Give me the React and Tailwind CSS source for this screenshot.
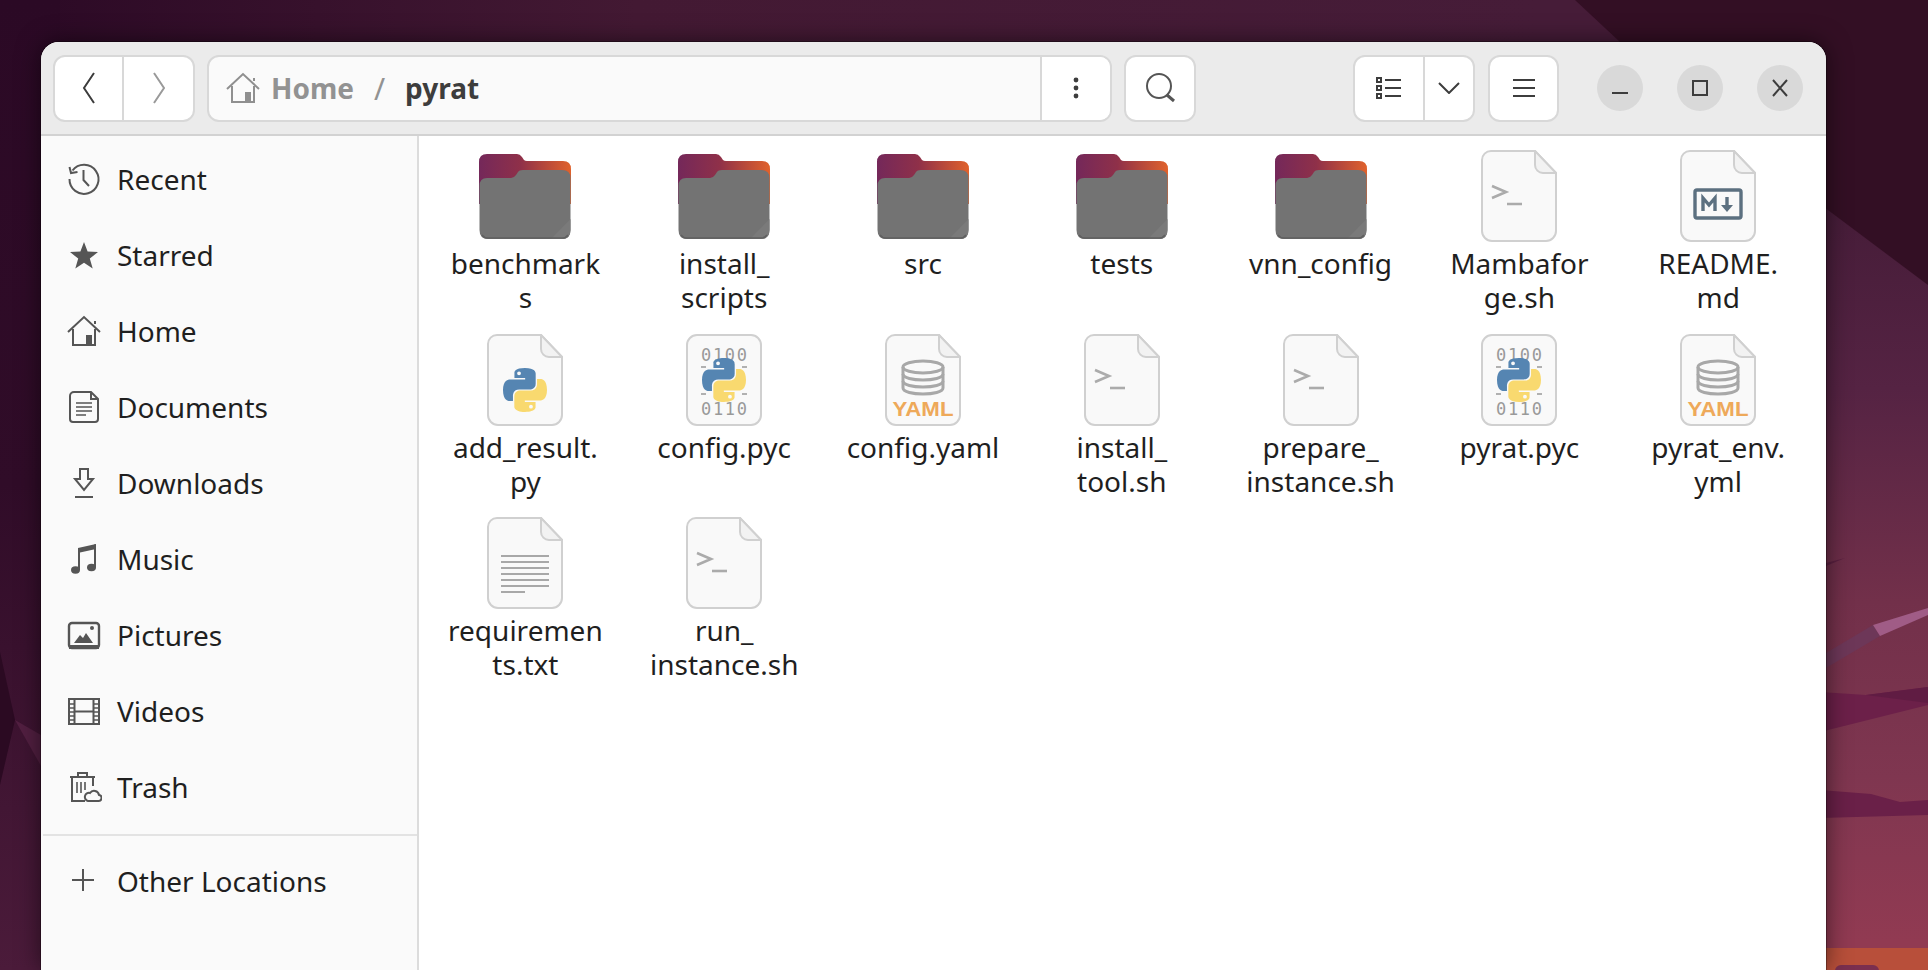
import React from "react";

const Wallpaper = () => (
  <svg className="absolute inset-0" width="1928" height="970" viewBox="0 0 1928 970">
    <defs>
      <linearGradient id="wtop" x1="0" y1="0" x2="1" y2="0">
        <stop offset="0" stopColor="#2b0925" />
        <stop offset="0.33" stopColor="#431933" />
        <stop offset="0.8" stopColor="#461c38" />
        <stop offset="1" stopColor="#461c38" />
      </linearGradient>
      <linearGradient id="wleft" x1="0" y1="0" x2="0" y2="1">
        <stop offset="0" stopColor="#2b0925" />
        <stop offset="0.5" stopColor="#300c28" />
        <stop offset="1" stopColor="#4b1b3a" />
      </linearGradient>
      <linearGradient id="wright" x1="0" y1="0" x2="0" y2="1">
        <stop offset="0.2" stopColor="#451c38" />
        <stop offset="0.4" stopColor="#552343" />
        <stop offset="0.62" stopColor="#72304a" />
        <stop offset="0.8" stopColor="#7f3650" />
        <stop offset="0.97" stopColor="#913a52" />
      </linearGradient>
    </defs>
    <rect width="1928" height="970" fill="url(#wtop)" />
    <rect x="0" y="0" width="60" height="970" fill="url(#wleft)" />
    <rect x="1800" y="0" width="128" height="970" fill="url(#wright)" />
    <polygon points="1575,0 1928,0 1928,285 1820,204 1620,42" fill="#330f24" />
    <polygon points="0,652 15,720 0,785" fill="#2b0a22" />
    <polygon points="15,720 41,735 41,766" fill="#521f41" />
    <polygon points="1826,563 1845,558 1826,566" fill="#5a2040" />
    <polygon points="1826,653 1873,625 1880,636 1826,668" fill="#6d3758" />
    <polygon points="1873,625 1928,608 1928,615 1880,636" fill="#a05c86" />
    <polygon points="1820,692 1866,695 1928,687 1928,705 1820,732" fill="#6c2049" />
    <polygon points="1866,695 1928,687 1928,703" fill="#601c43" />
    <polygon points="1820,790 1871,794 1900,802 1928,800 1928,815 1820,818" fill="#6a2048" />
    <rect x="1800" y="948" width="128" height="22" fill="#b84f3a" />
    <rect x="1835" y="965" width="44" height="20" rx="6" fill="#7a2f4f" />
  </svg>
);

const Back = ({ color }) => (
  <svg width="16" height="34" viewBox="0 0 16 34" fill="none" stroke={color} strokeWidth="2">
    <path d="M13 2 L3 17 L13 32" />
  </svg>
);
const Forward = ({ color }) => (
  <svg width="16" height="34" viewBox="0 0 16 34" fill="none" stroke={color} strokeWidth="2">
    <path d="M3 2 L13 17 L3 32" />
  </svg>
);

const HomeGlyph = ({ color }) => (
  <svg width="36" height="36" viewBox="0 0 36 36" fill="none" stroke={color} strokeWidth="2">
    <path d="M2 19 L18 4 L34 19" />
    <path d="M7 16 V32 H29 V16" />
    <rect x="20" y="22" width="6" height="10" fill={color} stroke="none" />
    <path d="M29 8 V11" />
  </svg>
);

const glyphs = {
  recent: (
    <g fill="none" stroke="#555" strokeWidth="2">
      <path d="M6.5 9.5 A14.5 14.5 0 1 1 3.5 18" />
      <path d="M3.5 6 L5 12 L11.5 11" />
      <path d="M17.5 9 V19 L23 25" />
    </g>
  ),
  star: <path d="M18 5 L21.6 14.6 L32 15.1 L23.8 21.5 L26.7 31.5 L18 25.7 L9.3 31.5 L12.2 21.5 L4 15.1 L14.4 14.6 Z" fill="#555" />,
  documents: (
    <g fill="none" stroke="#555" strokeWidth="2">
      <path d="M8 3 H25 L32 10 V30 A3 3 0 0 1 29 33 H7 A3 3 0 0 1 4 30 V7 A4 4 0 0 1 8 3 Z" />
      <path d="M25 3 V10 H32" />
      <path d="M10 14 H26 M10 18 H26 M10 22 H26 M10 26 H20" strokeWidth="1.5" />
    </g>
  ),
  downloads: (
    <g fill="none" stroke="#555" strokeWidth="2">
      <path d="M14 4 H22 V14 H27 L18 25 L9 14 H14 Z" />
      <path d="M9 32 H27" />
    </g>
  ),
  music: (
    <g fill="#555" stroke="none">
      <path d="M12 7 L30 3 V8 L14 11.5 V29 H12 Z" />
      <path d="M28 3.5 H30 V26 H28 Z" />
      <ellipse cx="9.5" cy="29" rx="4.5" ry="3.7" />
      <ellipse cx="25.5" cy="26.5" rx="4.5" ry="3.7" />
    </g>
  ),
  pictures: (
    <g>
      <rect x="3" y="6" width="30" height="25" rx="3" fill="none" stroke="#555" strokeWidth="2.4" />
      <rect x="3" y="28" width="30" height="4" fill="#555" />
      <path d="M8 26 L14 18 L17 21 L20 16 L27 26 Z" fill="#555" />
      <circle cx="26" cy="11" r="2" fill="#555" />
    </g>
  ),
  videos: (
    <g fill="none" stroke="#555" strokeWidth="2">
      <rect x="3" y="6" width="30" height="25" />
      <path d="M8.5 6 V31 M27.5 6 V31 M8.5 18.5 H27.5" />
      <path d="M3 11 H8 M3 15 H8 M3 19 H8 M3 23 H8 M3 27 H8 M28 11 H33 M28 15 H33 M28 19 H33 M28 23 H33 M28 27 H33" strokeWidth="1.5" />
    </g>
  ),
  trash: (
    <g fill="none" stroke="#555" strokeWidth="2">
      <path d="M4 8 H29 M12 8 V4 H21 V8" />
      <path d="M6 8 V32 H19 M27 8 V17" />
      <path d="M11 13 V24 M15 13 V24 M19 13 V21" strokeWidth="1.6" />
      <path d="M22 32 H32 A3 3 0 0 0 33 26 A5 5 0 0 0 24 24 A4 4 0 0 0 22 32 Z" />
    </g>
  ),
  plus: <path d="M6 17 H28 M17 6 V28" fill="none" stroke="#555" strokeWidth="2" />,
};

const places = [
  ["Recent", "recent"],
  ["Starred", "star"],
  ["Home", "home"],
  ["Documents", "documents"],
  ["Downloads", "downloads"],
  ["Music", "music"],
  ["Pictures", "pictures"],
  ["Videos", "videos"],
  ["Trash", "trash"],
];

const Place = ({ label, icon }) => (
  <div className="flex h-[76px] items-center pl-[25px]">
    {icon === "home" ? (
      <HomeGlyph color="#555" />
    ) : (
      <svg width="36" height="36" viewBox="0 0 36 36">
        {glyphs[icon]}
      </svg>
    )}
    <span className="ml-[15px] text-[28px] text-[#1f1f1f]">{label}</span>
  </div>
);

const Folder = () => (
  <svg width="92" height="85" viewBox="0 0 92 85">
    <defs>
      <linearGradient id="fb" x1="0" y1="0" x2="1" y2="0">
        <stop offset="0" stopColor="#74285a" />
        <stop offset="0.45" stopColor="#8f3049" />
        <stop offset="1" stopColor="#e0622c" />
      </linearGradient>
    </defs>
    <path d="M8 0 H38 Q41 0 43 3 L45 6 Q46 7 48 7 H84 Q92 7 92 15 V50 H0 V8 Q0 0 8 0 Z" fill="url(#fb)" />
    <path d="M0.5 32 Q0.5 24 8 24 H32 Q35 24 37 21 L39 18 Q40 16 44 16 H83 Q91.5 16 91.5 24 V76 Q91.5 85 83 85 H9 Q0.5 85 0.5 76 Z" fill="#737373" />
    <path d="M72 85 L91.5 65 V76 Q91.5 85 83 85 Z" fill="#7a7a7a" />
    <path d="M3 81 Q5 84 9 84 H83 Q87 84 89 81" fill="none" stroke="#606060" strokeWidth="1.5" />
  </svg>
);

const Sheet = ({ fold = true, children }) => (
  <svg width="78" height="94" viewBox="-1 -1 78 94">
    {fold ? (
      <path d="M10 1 H54 L75 23 V81 A10 10 0 0 1 65 91 H11 A10 10 0 0 1 1 81 V10 A9 9 0 0 1 10 1 Z" fill="#f9f9f9" stroke="#d0d0d0" strokeWidth="2" />
    ) : (
      <rect x="1" y="1" width="74" height="90" rx="10" fill="#f9f9f9" stroke="#d0d0d0" strokeWidth="2" />
    )}
    {fold && <path d="M54 1 V15 A8 8 0 0 0 62 23 H75 Z" fill="#f2f2f2" stroke="#d0d0d0" strokeWidth="2" strokeLinejoin="round" />}
    {children}
  </svg>
);

const Python = ({ x, y }) => (
  <g transform={`translate(${x} ${y}) scale(0.4)`}>
    <path d="M54.9 0C26.8 0 28.6 12.2 28.6 12.2V24.8H55.4V28.6H17.9S0 26.6 0 55 15.6 82.4 15.6 82.4H24.9V69.2S24.4 53.6 40.3 53.6H66.8S81.7 53.8 81.7 39.2V14.9S84 0 54.9 0ZM40.1 8.5A4.8 4.8 0 1 1 40.1 18.1 4.8 4.8 0 0 1 40.1 8.5Z" fill="#5585b2" fillRule="evenodd" />
    <path d="M54.9 0C26.8 0 28.6 12.2 28.6 12.2V24.8H55.4V28.6H17.9S0 26.6 0 55 15.6 82.4 15.6 82.4H24.9V69.2S24.4 53.6 40.3 53.6H66.8S81.7 53.8 81.7 39.2V14.9S84 0 54.9 0ZM40.1 8.5A4.8 4.8 0 1 1 40.1 18.1 4.8 4.8 0 0 1 40.1 8.5Z" fill="#f9d96f" fillRule="evenodd" transform="rotate(180 55 55)" />
  </g>
);

const Prompt = () => (
  <g fill="none" stroke="#ababab" strokeWidth="2.6">
    <path d="M11 36 L25 42 L11 48" />
    <path d="M26 54 H41" />
  </g>
);

const Yaml = () => (
  <g>
    <g fill="none" stroke="#a8a8a8" strokeWidth="3">
      <ellipse cx="38" cy="33" rx="20" ry="6" />
      <path d="M18 33 V54 C18 62 58 62 58 54 V33" />
      <path d="M18 40 C18 48 58 48 58 40 M18 47 C18 55 58 55 58 47" />
    </g>
    <text x="38" y="82" textAnchor="middle" fontFamily="'Liberation Sans', sans-serif" fontWeight="700" fontSize="21" textLength="61" lengthAdjust="spacingAndGlyphs" fill="#eea95a">YAML</text>
  </g>
);

const FileIcon = ({ kind }) => {
  if (kind === "folder") return <Folder />;
  if (kind === "sh") return <Sheet><Prompt /></Sheet>;
  if (kind === "py") return <Sheet><Python x="16" y="34" /></Sheet>;
  if (kind === "yaml") return <Sheet><Yaml /></Sheet>;
  if (kind === "txt")
    return (
      <Sheet>
        <path d="M14 39 H62 M14 45 H62 M14 51 H62 M14 57 H62 M14 63 H62 M14 69 H62 M14 75 H38" stroke="#a8a8a8" strokeWidth="1.8" fill="none" />
      </Sheet>
    );
  if (kind === "md")
    return (
      <Sheet>
        <rect x="15" y="40" width="46" height="28" rx="2" fill="none" stroke="#5c7080" strokeWidth="3.4" />
        <path d="M23 61 V48 L29 55 L35 48 V61" fill="none" stroke="#5c7080" strokeWidth="3.4" />
        <path d="M47 47 V59" stroke="#5c7080" strokeWidth="3.4" />
        <path d="M41 55 H53 L47 62 Z" fill="#5c7080" />
      </Sheet>
    );
  return (
    <Sheet fold={false}>
      <text x="38" y="27" textAnchor="middle" fontFamily="'DejaVu Sans Mono', monospace" fontSize="17" textLength="46" fill="#999999">0100</text>
      <text x="38" y="81" textAnchor="middle" fontFamily="'DejaVu Sans Mono', monospace" fontSize="17" textLength="46" fill="#999999">0110</text>
      <path d="M15 33 H20 M56 33 H61 M15 60 H20 M56 60 H61" stroke="#999999" strokeWidth="1.6" />
      <Python x="16" y="24" />
    </Sheet>
  );
};

const files = [
  ["folder", "benchmark", "s"],
  ["folder", "install_", "scripts"],
  ["folder", "src"],
  ["folder", "tests"],
  ["folder", "vnn_config"],
  ["sh", "Mambafor", "ge.sh"],
  ["md", "README.", "md"],
  ["py", "add_result.", "py"],
  ["pyc", "config.pyc"],
  ["yaml", "config.yaml"],
  ["sh", "install_", "tool.sh"],
  ["sh", "prepare_", "instance.sh"],
  ["pyc", "pyrat.pyc"],
  ["yaml", "pyrat_env.", "yml"],
  ["txt", "requiremen", "ts.txt"],
  ["sh", "run_", "instance.sh"],
];

const btn = "flex h-[67px] items-center justify-center rounded-[12px] border-2 border-[#d8d8d8] bg-white";

const WinBtn = ({ children }) => (
  <div className="flex h-[46px] w-[46px] items-center justify-center rounded-full bg-[#d9d9d9]">
    <svg width="20" height="20" viewBox="0 0 20 20" fill="none" stroke="#3d3d3d" strokeWidth="2">
      {children}
    </svg>
  </div>
);

export default function App() {
  return (
    <div className="relative h-[970px] w-[1928px] overflow-hidden pl-[41px] pt-[42px] font-['Noto_Sans',sans-serif]">
      <Wallpaper />
      <div className="relative flex h-[928px] w-[1785px] flex-col overflow-hidden rounded-t-[18px] bg-white shadow-[0_0_24px_rgba(0,0,0,0.55),0_0_0_1px_rgba(0,0,0,0.3)]">
        <header className="flex h-[94px] shrink-0 items-center border-b-2 border-[#d2d2d2] bg-[#ebebeb] pl-[12px] pr-[23px]">
          <div className={`${btn} w-[142px]`}>
            <div className="flex h-full w-[69px] items-center justify-center border-r-2 border-[#d8d8d8]">
              <Back color="#3d3d3d" />
            </div>
            <div className="flex h-full flex-1 items-center justify-center">
              <Forward color="#9a9a9a" />
            </div>
          </div>
          <div className={`${btn} ml-[12px] w-[905px] !justify-start !bg-[#fafafa]`}>
            <div className="flex h-full flex-1 items-center pl-[16px]">
              <HomeGlyph color="#8f8f8f" />
              <span className="ml-[10px] text-[28px] font-bold text-[#929292]">Home</span>
              <span className="ml-[20px] text-[30px] text-[#929292]">/</span>
              <span className="ml-[20px] text-[28px] font-bold text-[#3d3d3d]">pyrat</span>
            </div>
            <div className="flex h-full w-[70px] items-center justify-center rounded-r-[10px] border-l-2 border-[#d8d8d8] bg-white">
              <svg width="6" height="22" viewBox="0 0 6 22" fill="#3d3d3d">
                <circle cx="3" cy="3" r="2.4" />
                <circle cx="3" cy="11" r="2.4" />
                <circle cx="3" cy="19" r="2.4" />
              </svg>
            </div>
          </div>
          <div className={`${btn} ml-[12px] w-[72px]`}>
            <svg width="34" height="34" viewBox="0 0 34 34" fill="none" stroke="#555" strokeWidth="2">
              <circle cx="16" cy="15" r="12" />
              <path d="M24 24 L31 30" strokeWidth="3" />
            </svg>
          </div>
          <div className="flex-1" />
          <div className={`${btn} w-[122px]`}>
            <div className="flex h-full w-[70px] items-center justify-center border-r-2 border-[#d8d8d8]">
              <svg width="26" height="22" viewBox="0 0 26 22" fill="none" stroke="#3d3d3d" strokeWidth="2">
                <rect x="1" y="1" width="4" height="4" />
                <rect x="1" y="9" width="4" height="4" />
                <rect x="1" y="17" width="4" height="4" />
                <path d="M9 3 H25 M9 11 H25 M9 19 H25" />
              </svg>
            </div>
            <div className="flex h-full flex-1 items-center justify-center">
              <svg width="22" height="12" viewBox="0 0 22 12" fill="none" stroke="#3d3d3d" strokeWidth="2">
                <path d="M1 1 L11 11 L21 1" />
              </svg>
            </div>
          </div>
          <div className={`${btn} ml-[13px] w-[71px]`}>
            <svg width="22" height="20" viewBox="0 0 22 20" fill="none" stroke="#3d3d3d" strokeWidth="2">
              <path d="M0 2 H22 M0 10 H22 M0 18 H22" />
            </svg>
          </div>
          <div className="ml-[38px] flex gap-[34px]">
            <WinBtn>
              <path d="M2 15 H18" />
            </WinBtn>
            <WinBtn>
              <rect x="3" y="3" width="14" height="14" />
            </WinBtn>
            <WinBtn>
              <path d="M3 2 L17 18 M17 2 L3 18" />
            </WinBtn>
          </div>
        </header>
        <div className="flex min-h-0 flex-1">
          <aside className="w-[378px] shrink-0 border-r-2 border-[#dcdcdc] bg-[#fafafa] pt-[5px]">
            {places.map(([label, icon]) => (
              <Place key={label} label={label} icon={icon} />
            ))}
            <div className="ml-[2px] mt-[9px] border-t-2 border-[#e3e3e3]" />
            <div className="mt-[7px]">
              <Place label="Other Locations" icon="plus" />
            </div>
          </aside>
          <main className="grid flex-1 auto-rows-[183.5px] grid-cols-[repeat(7,198.8px)] content-start bg-white pl-[7px] pt-[14px]">
            {files.map(([kind, ...lines], i) => (
              <div key={i} className="flex flex-col items-center">
                <div className="flex h-[92px] items-center justify-center">
                  <FileIcon kind={kind} />
                </div>
                <div className="mt-[4px] text-center text-[28px] leading-[34px] text-[#1f1f1f]">
                  {lines.map((l) => (
                    <div key={l} className="whitespace-nowrap">{l}</div>
                  ))}
                </div>
              </div>
            ))}
          </main>
        </div>
      </div>
    </div>
  );
}
